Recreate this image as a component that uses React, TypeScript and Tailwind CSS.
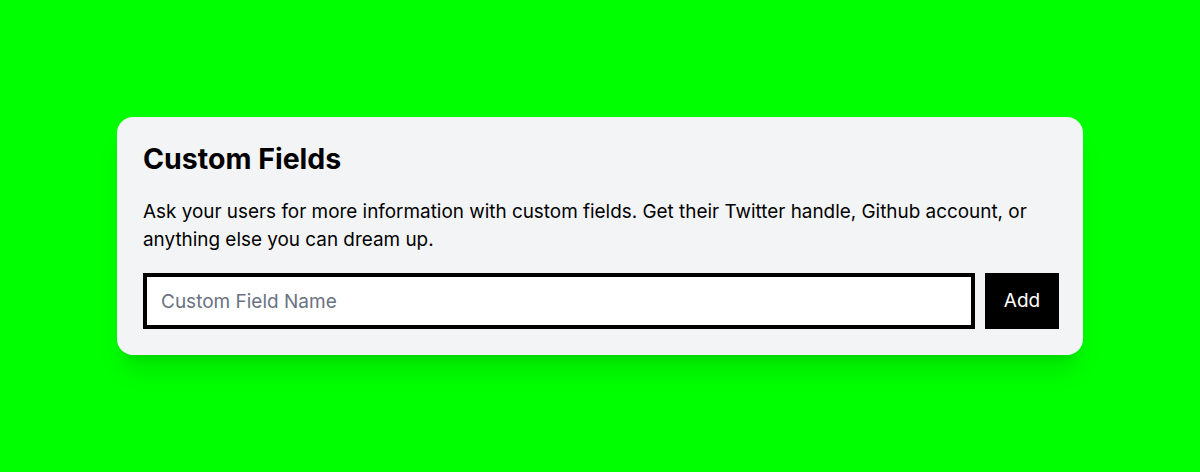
export default function App() {
  return (
    <div className="min-h-screen w-full bg-[#00ff00] flex items-center justify-center" style={{ fontFamily: 'Inter, "Noto Sans", sans-serif' }}>
      <div className="w-[966px] rounded-2xl bg-gray-100 pl-[26px] pr-6 pt-6 pb-[26px] shadow-xl">
        <h2 className="text-[28.5px] leading-9 font-bold text-black">Custom Fields</h2>
        <p className="mt-[21px] text-[18.9px] leading-7 text-black">
          Ask your users for more information with custom fields. Get their Twitter handle, Github account, or anything else you can dream up.
        </p>
        <div className="mt-[19px] flex gap-2.5">
          <input
            type="text"
            placeholder="Custom Field Name"
            className="h-14 flex-1 border-4 border-black bg-white pl-3.5 text-[19px] text-black placeholder:text-gray-500 outline-none"
          />
          <button className="h-14 w-[74px] bg-black text-[19px] text-white">Add</button>
        </div>
      </div>
    </div>
  );
}
